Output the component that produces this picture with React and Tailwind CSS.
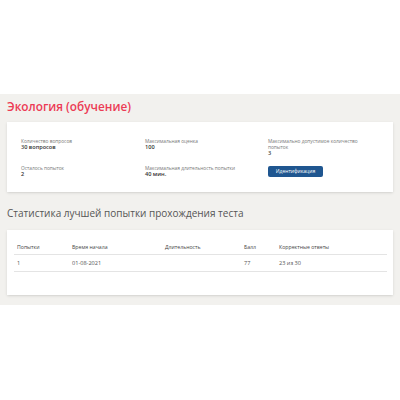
const info = [
  { label: "Количество вопросов", value: "30 вопросов" },
  { label: "Максимальная оценка", value: "100" },
  { label: "Максимально допустимое количество попыток", value: "3" },
  { label: "Осталось попыток", value: "2" },
  { label: "Максимальная длительность попытки", value: "40 мин." },
];

const rows = [
  { attempt: "1", start: "01-08-2021", duration: "", score: "77", correct: "23 из 30" },
];

const InfoCell = ({ label, value }) => (
  <div>
    <div className="text-[4.8px] leading-[6px] text-[#777] max-w-[92px]">{label}</div>
    <div className="text-[5.6px] leading-[7px] font-semibold text-[#333]">{value}</div>
  </div>
);

export default function App() {
  return (
    <div className="w-[400px] h-[400px] bg-white" style={{ fontFamily: '"Open Sans", "Noto Sans", sans-serif' }}>
      <div className="h-[94px]" />

      <div className="bg-[#f2f1ee] px-[7px] pt-[4px] pb-[10px]">
        <h1 className="text-[11.8px] leading-[16px] font-semibold text-[#ec3b55]">
          Экология (обучение)
        </h1>

        {/* Test info */}
        <div className="mt-[8px] bg-white shadow-sm h-[70px] pl-[14px] pt-[16px]">
          <div className="grid grid-cols-[124px_123px_1fr] gap-y-[8px]">
            <InfoCell {...info[0]} />
            <InfoCell {...info[1]} />
            <InfoCell {...info[2]} />
            <InfoCell {...info[3]} />
            <InfoCell {...info[4]} />
            <div className="flex pt-[1px]">
              <button className="block h-[11px] w-[55px] rounded-[2px] bg-[#1f5690] text-white text-[5px] leading-[11px]">
                Идентификация
              </button>
            </div>
          </div>
        </div>

        <h2 className="mt-[14px] mb-[10px] text-[10px] leading-[14px] text-[#555]">
          Статистика лучшей попытки прохождения теста
        </h2>

        {/* Best attempt table */}
        <div className="bg-white shadow-sm h-[65px] pt-[11px] pl-[7px] pr-[6px]">
          <div className="grid grid-cols-[55px_93px_79px_35px_1fr] h-[14px] items-center pl-[3px] border-b border-[#e4e4e4] text-[5.2px] text-[#444]">
            <div>Попытки</div>
            <div>Время начала</div>
            <div>Длительность</div>
            <div>Балл</div>
            <div>Корректные ответы</div>
          </div>
          {rows.map((r) => (
            <div
              key={r.attempt}
              className="grid grid-cols-[55px_93px_79px_35px_1fr] h-[17px] items-center pl-[3px] border-b border-[#e4e4e4] text-[5.6px] text-[#555]"
            >
              <div>{r.attempt}</div>
              <div>{r.start}</div>
              <div>{r.duration}</div>
              <div>{r.score}</div>
              <div>{r.correct}</div>
            </div>
          ))}
        </div>
      </div>
    </div>
  );
}
